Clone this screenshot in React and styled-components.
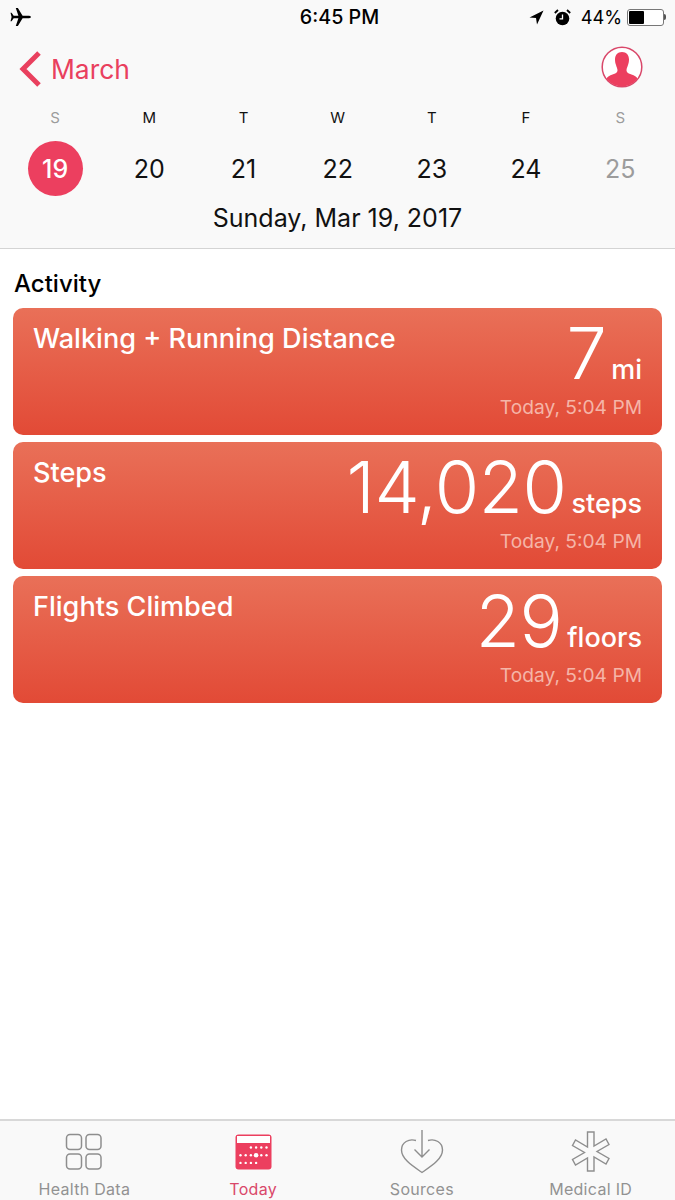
import React from "react";
import styled, { createGlobalStyle } from "styled-components";

const Global = createGlobalStyle`
  html, body { margin: 0; padding: 0; background: #fff; }
  body { font-family: Inter, "Noto Sans", "Liberation Sans", sans-serif; }
  * { box-sizing: border-box; }
`;
const Page = styled.div`
  width: 675px; height: 1200px; display: flex; flex-direction: column; overflow: hidden; background: #fff;
`;
const Header = styled.header`
  height: 249px; background: #f9f9f9; border-bottom: 1px solid #d4d4d4; display: flex; flex-direction: column;
`;
const StatusBar = styled.div`
  height: 34px; display: grid; grid-template-columns: 1fr auto 1fr; align-items: center; padding: 0 9px 0 10px; color: #000;
`;
const StatusLeft = styled.div`display: flex; align-items: center;`;
const StatusTime = styled.div`font-size: 19.7px; font-weight: 500; margin-left: 3px;`;
const StatusRight = styled.div`display: flex; align-items: center; justify-content: flex-end; gap: 10px; font-size: 18.2px; font-weight: 400;`;
const Battery = styled.div`display: flex; align-items: center; margin-left: -5px;`;
const BatteryBody = styled.div`
  width: 37px; height: 17px; border: 1px solid #777; border-radius: 3px; padding: 1px; background: #fff;
`;
const BatteryFill = styled.div`height: 100%; background: #000; border-radius: 1px;`;
const BatteryTip = styled.div`width: 2px; height: 6px; background: #555; border-radius: 0 2px 2px 0;`;
const NavRow = styled.div`
  height: 64px; display: flex; align-items: center; justify-content: space-between; padding: 6px 32px 0 19px;
`;
const BackLink = styled.div`display: flex; align-items: center; gap: 10px; color: #e9405e; font-size: 26.4px; line-height: 1;`;
const ProfileWrap = styled.div`display: flex; margin-bottom: 4px;`;
const WeekGrid = styled.div`
  display: grid; grid-template-columns: repeat(7, 94.2px); padding-left: 8px; justify-items: center;
`;
const DayLetter = styled.div`
  height: 24px; margin-top: 8px; font-size: 15px; line-height: 24px; color: ${p => (p.$muted ? "#9c9c9c" : "#111")};
`;
const DayCell = styled.div`
  height: 55px; margin-top: 11px; display: flex; align-items: center; justify-content: center;
`;
const DayNum = styled.div`
  width: 55px; height: 55px; border-radius: 50%; display: flex; align-items: center; justify-content: center;
  font-size: 25px; font-weight: ${p => (p.$selected ? 500 : 400)};
  background: ${p => (p.$selected ? "#ec3f5f" : "transparent")};
  color: ${p => (p.$selected ? "#fff" : p.$muted ? "#9c9c9c" : "#111")};
`;
const FullDate = styled.div`text-align: center; font-size: 25px; line-height: 30px; margin-top: 7px; color: #111;`;
const Content = styled.main`flex: 1; padding: 21px 13px 0;`;
const SectionTitle = styled.h2`margin: 0 0 10px 1px; font-size: 24px; line-height: 28px; font-weight: 500; color: #000;`;
const CardList = styled.div`display: flex; flex-direction: column; gap: 7px;`;
const Card = styled.div`
  height: 127px; border-radius: 10px; padding: 14px 20px 0 20px; color: #fff;
  background: linear-gradient(180deg, #e97058 0%, #e24a36 100%);
  display: flex; justify-content: space-between; align-items: flex-start;
`;
const CardTitle = styled.div`font-size: 27.1px; line-height: 33px; font-weight: 500;`;
const CardRight = styled.div`display: flex; flex-direction: column; align-items: flex-end;`;
const ValueRow = styled.div`display: flex; align-items: baseline; gap: 5px; height: 72px; margin-top: -5px;`;
const Value = styled.span`font-size: 72px; line-height: 72px; font-weight: 300; letter-spacing: -0.5px;`;
const Unit = styled.span`font-size: 27px; font-weight: 500;`;
const Stamp = styled.div`font-size: 19.2px; line-height: 24px; margin-top: 6px; color: #f5b5a8;`;
const TabBar = styled.nav`
  height: 81px; background: #f9f9f9; border-top: 2px solid #d8d8d8; display: grid; grid-template-columns: repeat(4, 1fr);
`;
const Tab = styled.div`
  display: flex; flex-direction: column; align-items: center; padding-top: 4px; color: ${p => (p.$active ? "#d9486a" : "#929292")};
`;
const TabIcon = styled.div`height: 54px; display: flex; align-items: center; justify-content: center;`;
const TabLabel = styled.div`font-size: 16px; line-height: 20px; letter-spacing: 0.3px;`;

const Plane = () => (
  <svg width="21" height="18" viewBox="0 0 20 17"><path fill="#000" d="M20 8.500c0-.8-1.500-1.200-3-1.200h-5L7.500 0h-2L8 7.300H3.500L1.500 4.500h-1l1 4-1 4h1l2-2.800H8L5.500 17h2l4.500-7.300h5c1.500 0 3-.4 3-1.200z" /></svg>
);
const Arrow = () => (
  <svg width="15" height="15" viewBox="0 0 15 15"><path fill="#000" d="M14.500 .5L8 14.500 7 8 .5 7.500z" /></svg>
);
const Alarm = () => (
  <svg width="17" height="17" viewBox="0 0 17 17">
    <circle cx="8.500" cy="9.500" r="6.800" fill="#000" />
    <path d="M8.500 5.500v4.300h-3" fill="none" stroke="#fff" strokeWidth="1.300" />
    <path d="M.8 4L4 1M16.200 4L13 1" stroke="#000" strokeWidth="1.800" />
  </svg>
);
const Chevron = () => (
  <svg width="22" height="36" viewBox="0 0 22 36"><path d="M20 2L4 18l16 16" fill="none" stroke="#e9405e" strokeWidth="5" /></svg>
);
const Profile = () => (
  <svg width="42" height="42" viewBox="0 0 42 42">
    <defs><clipPath id="pc"><circle cx="21" cy="21" r="19.500" /></clipPath></defs>
    <circle cx="21" cy="21" r="19.800" fill="#fff" stroke="#d9486a" strokeWidth="1.500" />
    <path clipPath="url(#pc)" fill="#ec3f5f" d="M21 6c4.500 0 7 3 7 7.500 0 2-.4 4-1 5.500-.6 2-1.500 3.500-1.500 5.500 0 2 2 3 5 4 3 1 5 2 6 4v9H5.500v-9c1-2 3-3 6-4 3-1 5-2 5-4 0-2-1-3.500-1.500-5.500-.6-1.500-1-3.500-1-5.500C14 9 16.500 6 21 6z" />
  </svg>
);
const GridIcon = () => (
  <svg width="38" height="38" viewBox="0 0 38 38" fill="none" stroke="#8e8e8e" strokeWidth="1.500">
    <rect x="1.500" y="1.500" width="15" height="15" rx="3.500" />
    <rect x="21" y="1.500" width="15" height="15" rx="3.500" />
    <rect x="1.500" y="21" width="15" height="15" rx="3.500" />
    <rect x="21" y="21" width="15" height="15" rx="3.500" />
  </svg>
);
const dots = [];
[0, 1, 2].forEach(r => {
  for (let c = 0; c < 6; c++) {
    if ((r === 0 && c < 2) || (r === 2 && c > 3)) continue;
    dots.push([c, r]);
  }
});
const CalendarIcon = () => (
  <svg width="37" height="36" viewBox="0 0 37 36">
    <rect x="0.500" y="0.500" width="36" height="35" rx="3" fill="#ec3f5f" />
    <rect x="2" y="2" width="33" height="7" fill="#fff" />
    {dots.map(([c, r]) => (
      <circle key={`${c}-${r}`} cx={5.500 + c * 5.200} cy={13.500 + r * 7.700} r={c === 3 && r === 1 ? 2.300 : 1.200} fill="#fff" />
    ))}
  </svg>
);
const HeartIcon = () => (
  <svg width="44" height="44" viewBox="0 0 44 44" fill="none" stroke="#8e8e8e" strokeWidth="1.400">
    <path d="M16 10.500C9 8.500 1.500 12 1.500 20c0 9 11 16 20.500 22.500C31.500 36 42.500 29 42.500 20c0-8-7.500-11.500-14.500-9.500" />
    <path d="M22 0v27M14.500 19.500L22 27l7.500-7.500" />
  </svg>
);
const StarIcon = () => (
  <svg width="42" height="42" viewBox="0 0 42 42" fill="none" stroke="#8e8e8e" strokeWidth="1.400">
    <path d="M17.500 1h6.500v14l12-7 3 5.500-12 7 12 7-3 5.500-12-7v14h-6.500V27l-12 7-3-5.500 12-7-12-7 3-5.500 12 7z" />
  </svg>
);

const week = [
  ["S", 19, false, true], ["M", 20], ["T", 21], ["W", 22], ["T", 23], ["F", 24], ["S", 25, true],
];
const cards = [
  ["Walking + Running Distance", "7", "mi"],
  ["Steps", "14,020", "steps"],
  ["Flights Climbed", "29", "floors"],
];

export default function App() {
  return (
    <Page>
      <Global />
      <Header>
        <StatusBar>
          <StatusLeft><Plane /></StatusLeft>
          <StatusTime>6:45 PM</StatusTime>
          <StatusRight>
            <Arrow /><Alarm /><span>44%</span>
            <Battery>
              <BatteryBody><BatteryFill style={{ width: "44%" }} /></BatteryBody>
              <BatteryTip />
            </Battery>
          </StatusRight>
        </StatusBar>
        <NavRow>
          <BackLink><Chevron /><span>March</span></BackLink>
          <ProfileWrap><Profile /></ProfileWrap>
        </NavRow>
        <WeekGrid>
          {week.map(([l, n, muted, sel], i) => (
            <DayLetter key={i} $muted={muted || sel}>{l}</DayLetter>
          ))}
          {week.map(([l, n, muted, sel], i) => (
            <DayCell key={i}><DayNum $muted={muted} $selected={sel}>{n}</DayNum></DayCell>
          ))}
        </WeekGrid>
        <FullDate>Sunday, Mar 19, 2017</FullDate>
      </Header>
      <Content>
        <SectionTitle>Activity</SectionTitle>
        <CardList>
          {cards.map(([t, v, u]) => (
            <Card key={t}>
              <CardTitle>{t}</CardTitle>
              <CardRight>
                <ValueRow><Value>{v}</Value><Unit>{u}</Unit></ValueRow>
                <Stamp>Today, 5:04 PM</Stamp>
              </CardRight>
            </Card>
          ))}
        </CardList>
      </Content>
      <TabBar>
        <Tab><TabIcon><GridIcon /></TabIcon><TabLabel>Health Data</TabLabel></Tab>
        <Tab $active><TabIcon><CalendarIcon /></TabIcon><TabLabel>Today</TabLabel></Tab>
        <Tab><TabIcon><HeartIcon /></TabIcon><TabLabel>Sources</TabLabel></Tab>
        <Tab><TabIcon><StarIcon /></TabIcon><TabLabel>Medical ID</TabLabel></Tab>
      </TabBar>
    </Page>
  );
}
